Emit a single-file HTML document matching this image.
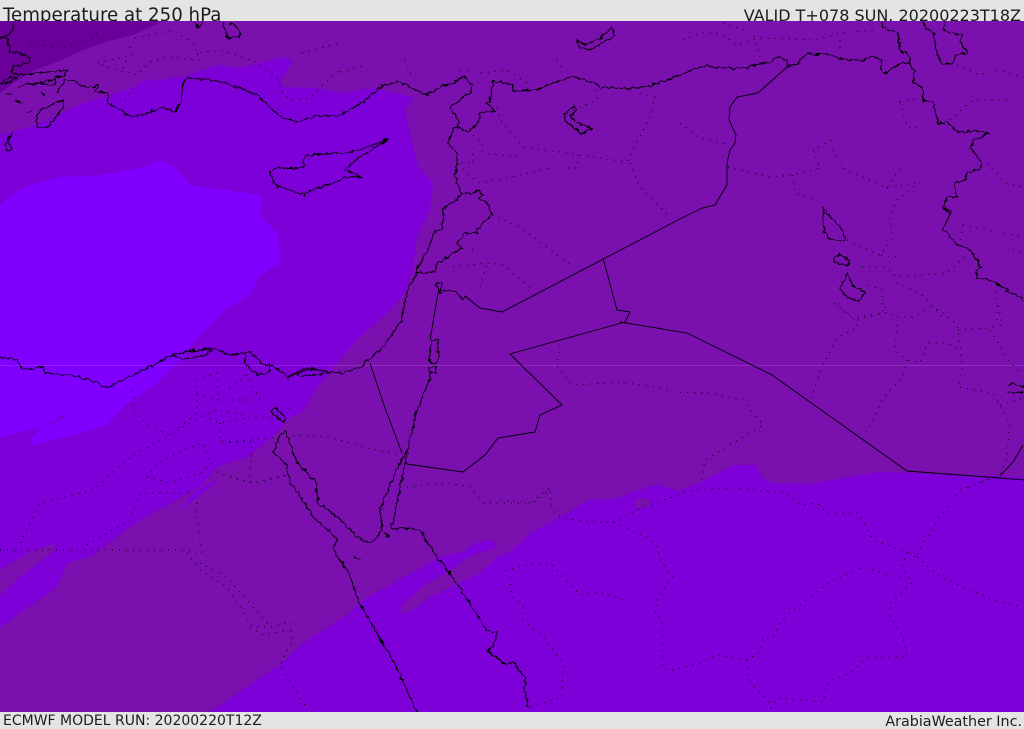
<!DOCTYPE html>
<html><head><meta charset="utf-8"><title>Temperature at 250 hPa</title>
<style>
html,body{margin:0;padding:0;background:#e4e4e4;width:1024px;height:729px;overflow:hidden}
svg{display:block}
text{font-family:"DejaVu Sans","Liberation Sans",sans-serif;fill:#1c1c1c}
.c{fill:none;stroke:#000;stroke-width:1.1;stroke-linejoin:round}
.b{fill:none;stroke:#000;stroke-width:.9}
.d{fill:none;stroke:#000;stroke-width:1;stroke-dasharray:1 6}
</style></head><body>
<svg width="1024" height="729" viewBox="0 0 1024 729" xmlns="http://www.w3.org/2000/svg">
<defs>
<filter id="w" filterUnits="userSpaceOnUse" x="0" y="0" width="1024" height="729" color-interpolation-filters="sRGB">
<feTurbulence type="fractalNoise" baseFrequency=".22" numOctaves="2" seed="4" result="n"/>
<feDisplacementMap in="SourceGraphic" in2="n" scale="5" xChannelSelector="R" yChannelSelector="G"/>
</filter>
</defs>
<rect width="1024" height="729" fill="#e4e4e4"/>
<text x="3" y="21" font-size="18.2">Temperature at 250 hPa</text>
<text x="1021" y="21" font-size="16" text-anchor="end">VALID T+078 SUN. 20200223T18Z</text>
<text x="3" y="725" font-size="14">ECMWF MODEL RUN: 20200220T12Z</text>
<text x="1022" y="726" font-size="14.3" text-anchor="end">ArabiaWeather Inc.</text>
<svg x="0" y="21" width="1024" height="691" viewBox="0 21 1024 691">
<rect y="21" width="1024" height="691" fill="#7a10ae"/>
<path fill="#6a0099" d="M0 21H163L133 35 105 42 83 50 57 62 35 70 15 82 0 93Z"/>
<path fill="#7d00d8" d="M0 135 37 125 83 103 133 88 143 81 183 77 217 65 240 68 283 57 293 62 280 80 283 87 317 88 340 93 373 88 413 97 405 110 410 133 418 167 433 183 430 210 417 237 413 267 406 292 385 315 357 340 333 367 313 393 305 410 287 420 273 437 247 457 217 467 200 487 137 522 90 557 67 563 57 587 20 613 0 628Z"/>
<path fill="#7a10ae" d="M0 570 30 552 57 543 53 552 20 577 0 595Z"/>
<path fill="#8000ff" d="M0 205 12 195 30 185 60 177 100 175 140 168 160 160 175 168 190 185 225 190 262 195 260 215 278 235 280 262 258 278 250 295 225 310 200 335 180 360 157 383 125 405 107 425 75 435 32 445 32 438 42 427 0 437Z"/>
<path fill="#7d00d8" d="M42 427 68 412 62 420 50 424Z"/>
<path fill="#7d00d8" d="M180 510 193 493 218 478 212 486 200 495 185 507Z"/>
<path fill="#7d00d8" d="M210 712 280 665 303 643 350 613 363 600 440 557 463 552 477 542 493 540 496 548 470 556 450 570 425 585 402 605 400 613 410 612 430 597 455 585 480 573 497 557 513 550 530 533 555 520 590 500 620 498 630 493 657 484 677 491 700 483 733 465 757 465 762 478 773 483 807 484 880 472 1024 477V712Z"/>
<ellipse cx="643" cy="503" rx="8" ry="5" fill="#7a10ae"/>
<rect y="365" width="1024" height="1" fill="#fff" fill-opacity=".13"/>

<g class="d">
<path d="M30 43 60 48 90 40 97 33M135 38 173 30 193 43 197 53 220 50 250 60 257 63 277 78 283 93 290 100 310 98 317 90 340 70M130 47 132 55 97 63 117 70 138 75 150 62 167 57 200 60 197 53M123 68 127 57M302 53 340 43M125 100 133 88M340 72 367 65M405 60 412 77M460 70 483 73 507 70 527 83M557 60 562 70M597 90 597 100 573 110"/>
<path d="M497 108 500 120 515 137 523 147 580 155 627 162 650 117 655 97 640 93M630 163 640 187 670 217M578 155 577 168 550 168 507 178 480 183 468 175 457 163 473 163M473 135 482 142 483 153 520 157M472 147 473 163M492 215 520 227 573 267M453 267 487 263 503 265 533 290M480 287 487 263M472 250 478 250"/>
<path d="M683 40 700 33 720 33 737 45 760 38 817 40 840 33 877 30M723 23 753 33 760 57M840 40 840 53M957 65 980 75 997 70 1023 77M950 120 973 100 1013 100M900 102 920 98M900 102 907 127 920 128M987 163 1005 183 1023 187M963 225 1023 237M963 225 960 245M1013 250 1023 252M680 123 700 138 730 145M728 167 770 177 793 175 820 168 813 150 835 138M793 175 795 193 815 200M833 150 843 168 887 188 900 168M887 188 920 182M920 182 897 200 890 217 892 240 880 255 897 257M847 240 880 255M862 267 885 267 897 277 947 273 967 255M897 283 920 293 943 317M868 285 882 290 883 313 853 318 830 300M997 320 997 290"/>
<path d="M811 398 823 365 837 338 858 327 853 317 833 303M858 320 887 312 895 317 913 317 930 307 942 312 957 325 960 345 962 370 958 387 993 393 1000 405 1010 423 1007 457 1000 475 967 488M883 300 887 312M958 330 987 328 1002 325 997 300M990 330 1010 363 1020 372M897 325 895 350 907 360 920 363 927 343 947 343 962 350M907 360 903 377 883 398 875 417 863 437M1000 405 1023 398"/>
<path d="M560 345 557 365 570 383 576 385 620 382 660 388 673 392 710 393 743 400 763 425 705 460 702 480"/>
<path d="M0 550 187 550 200 553M20 543 40 503 93 490 133 455 167 437 200 417 217 410 260 418 277 418M87 545 130 520 140 493 193 493M147 477 170 483 200 473 213 463M147 477 157 463 190 447 203 443 210 460M197 517 202 553M197 503 197 517M187 553 200 570 227 587 253 627 270 627 290 622 293 640 280 665 295 690 308 710M200 563 227 577 253 607 270 627M250 627 263 635 290 630M133 390 133 410 150 427 170 435 197 413 197 380 217 373 218 400 260 400 247 375 227 390M197 395 218 400M197 413 220 423 247 418M220 423 220 442 252 442 250 473 250 483 287 475M217 472 250 483M288 380 288 413"/>
<path d="M230 478 257 483 287 475M230 442 298 435 330 437 363 447 400 455M407 487 447 483 470 487 483 503 530 503 550 488"/>
<path d="M500 500 533 503 550 490 552 510 562 518 593 522 613 522 647 537 657 547 660 560 673 577 663 590 657 600 623 600 600 592 580 595 555 568 550 563 525 565 500 572M613 522 643 507 693 490 733 488 787 493 800 505 817 503 827 513 858 513 873 540 907 552 917 558 920 548 943 513 960 490 987 480M917 557 940 577 993 600 1023 607M907 552 902 567 912 583 890 603 890 617 903 637 907 657 867 658 850 673 828 682 823 702 777 698 770 710M900 578 863 567 833 580 803 602 780 622 773 638 763 638 760 652 747 660 717 655 700 663 668 671 662 667 662 620 655 613 657 600M747 660 750 682 767 700 772 710M510 577 512 597 523 605 522 620 542 635 555 653 563 663 562 697 530 707"/>
</g>

<g class="c" filter="url(#w)">
<path d="M13 22 13 30 8 35 0 38M0 38 8 40 10 52 20 53 30 58 30 63 13 67 12 73 17 75 68 70 63 77 55 77 55 85 40 83M18 87 23 85 55 80M57 93 65 80 73 80 83 87 93 87 98 85 95 92 107 92 108 103 120 110 132 117 143 115 163 107 175 112 180 103 183 93 183 82 188 78 217 81 240 88 258 95 270 108 283 118 297 122 313 117 340 115 353 108 363 102 383 85 400 82 427 95 440 87 453 83 463 76 472 85 471 92 450 107 460 123 453 130 448 143 457 153 455 177 461 193 457 200 450 203 443 210 442 230 435 231 428 250 415 272 414 280 408 287 405 300 402 320 385 345 360 368 340 373 330 372 313 368 288 377 272 365 263 365 250 352 230 355 210 348 172 355 157 363 107 388 90 380 70 375 45 373 43 367 23 370 17 360 0 357"/>
<path d="M245 352 245 364 258 375 270 372 270 364M0 83 10 77 17 78 7 83ZM6 93 11 94M15 100 22 103M27 111H32M40 92 45 95"/>
<path d="M172 355 190 350 212 350 205 356 182 359 172 355M288 377 305 368 330 372 320 375 300 376"/>
<path d="M493 81 490 102 486 104 495 111 480 112 478 123 468 132 457 127M493 81 513 84 513 91 535 90 553 83 573 76 593 83 600 87 623 89 647 87 680 75 703 66 725 68 743 68 770 62 778 56 787 60 787 67 797 65 807 53 813 55 823 53 843 59 860 61 872 56 882 60 880 68 885 73 902 63 910 63M882 22 883 28 898 33 900 50 910 57 910 68 915 70 913 82 923 88 923 100 933 102 938 123 947 122 958 132 977 131 990 133 973 140 972 150 982 162 980 170 967 172 965 180 955 183 957 197 947 197 943 207 950 212 948 220 942 228 958 245 968 248 975 257 982 267 975 273 978 279 990 280 1023 300"/>
<path d="M461 193 475 193 477 190 483 195 478 199 487 203 492 215 483 223 475 232 479 234 465 233 457 243 462 248 437 264 435 272 423 273 415 272M438 293 447 290 457 292 463 300"/>
<path d="M923 22 925 28 933 32 937 53 943 65 952 63 957 55 968 53 960 42 962 35 948 33 942 28 945 22"/>
<path d="M193 22 198 28 203 22M222 22 228 38 240 37 238 28 230 23M577 40 585 45 600 38 612 28 615 35 605 42 590 50 578 47Z"/>
<path d="M270 172 275 168 303 168 305 155 340 153 360 150 388 139 375 148 355 160 345 170 362 177 345 177 335 183 310 190 305 195 290 190 275 185Z"/>
<path d="M63 100 50 105 40 110 36 120 38 128 48 127 55 118 63 108ZM11 133 5 145 7 152 12 148 8 143 11 135Z"/>
<path d="M564 115 574 106 576 110 570 116 576 122 592 128 581 134 567 122ZM823 208 830 217 843 230 845 241 832 240 824 232Z M834 258 840 254 850 262 847 267 835 262ZM848 273 852 285 865 292 858 302 846 296 840 288Z M1008 385 1013 383 1024 387M1008 392 1024 393 M437 283 441 283 442 289 438 292 436 287Z M384 534 390 537M354 557 360 560M487 650 507 665"/>
<path d="M432 340 438 340 438 363 430 363 430 350ZM432 373 428 368 436 367 436 374 432 373 417 410 407 453 403 457 393 477 380 510 382 530 372 543 360 540 337 517 318 503 316 482 297 462 285 430 280 435 273 452 287 465 290 483 298 493 313 517 330 532 337 540 333 550 349 573 358 600 377 633 393 660 417 712M408 453 400 487 393 522 390 530 400 528 420 530 437 557 450 573 487 630 497 633 495 642 488 652 507 665 513 662 525 677 525 693 528 707"/>
<path d="M271 411 276 408 285 417 285 422 275 416Z"/>
</g>
<g class="b">
<path d="M680 219 702 208 715 205 727 185 727 163 730 150 735 143 736 135 729 120 730 107 737 97 758 93 787 67M680 219 502 312 480 308 465 296 463 300M438 293 430 340M603 258 617 310 630 312 625 322 510 354 562 405 540 415 535 432 498 438 485 455 463 472 407 464M620 322 687 333 772 375 907 471 1000 478 1024 480M1000 476 1013 462 1023 445M370 363 385 408 402 453"/>
</g>
</svg>
</svg>
</body></html>
